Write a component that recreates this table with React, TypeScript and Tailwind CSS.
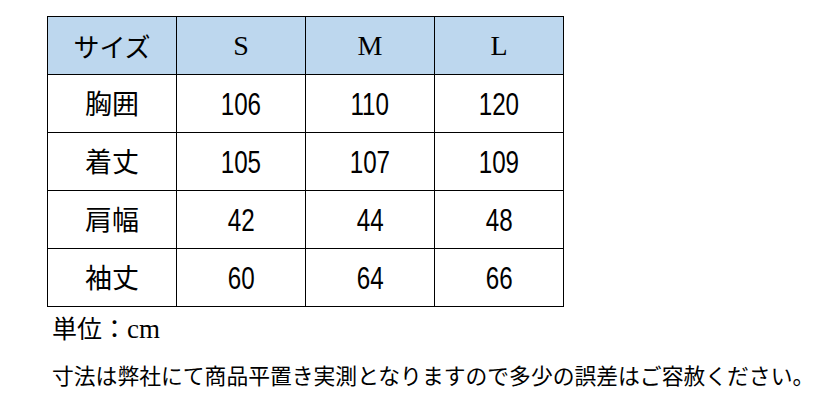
import React from "react";

const rows: [string, string, string, string][] = [
  ["胸囲", "106", "110", "120"],
  ["着丈", "105", "107", "109"],
  ["肩幅", "42", "44", "48"],
  ["袖丈", "60", "64", "66"],
];

export default function App() {
  return (
    <div className="w-[836px] h-[401px] bg-white text-black pl-[47px] pt-[16px] overflow-hidden font-['Noto_Sans_CJK_JP','Noto_Sans',sans-serif]">
      <div className="grid grid-cols-[129px_129px_129px_129px] w-[517px] border-l border-t border-black">
        <div className="h-[58px] border-r border-b border-black bg-[#bdd7ee] flex items-center justify-center text-[26px]">
          サイズ
        </div>
        {["S", "M", "L"].map((s) => (
          <div
            key={s}
            className="h-[58px] border-r border-b border-black bg-[#bdd7ee] flex items-center justify-center text-[28px] font-['Liberation_Serif','Times_New_Roman',serif]"
          >
            {s}
          </div>
        ))}
        {rows.map((r) => (
          <React.Fragment key={r[0]}>
            <div className="h-[58px] border-r border-b border-black flex items-center justify-center text-[27px]">
              {r[0]}
            </div>
            {r.slice(1).map((v, i) => (
              <div
                key={i}
                className="h-[58px] border-r border-b border-black flex items-center justify-center pt-[1px]"
              >
                <span className="inline-block text-[31px] leading-none scale-x-[0.78] font-['Liberation_Sans',Arial,sans-serif]">
                  {v}
                </span>
              </div>
            ))}
          </React.Fragment>
        ))}
      </div>
      <div className="mt-[3px] pl-[5px] text-[25px] leading-[34px]">
        単位：<span className="text-[27px] font-['Liberation_Serif','Times_New_Roman',serif]">cm</span>
      </div>
      <div className="mt-[14px] pl-[5px] text-[21.8px] leading-[30px] whitespace-nowrap">
        寸法は弊社にて商品平置き実測となりますので多少の誤差はご容赦ください。
      </div>
    </div>
  );
}
